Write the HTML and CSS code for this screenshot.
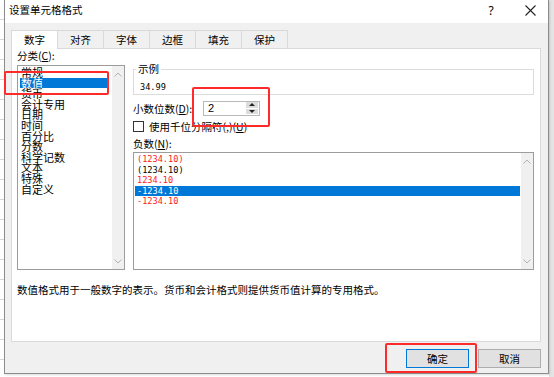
FILE: index.html
```html
<!DOCTYPE html>
<html lang="zh-CN">

<head>
    <meta charset="UTF-8" />
    <meta name="viewport" content="width=device-width, initial-scale=1.0" />
    <title>设置单元格格式</title>
    <link rel="stylesheet" href="styles.css">
</head>

<body>

    <div class="dialog">
        <div class="titlebar">
            <span class="title">设置单元格格式</span>
            <span class="help">?</span>
            <span class="close">
                <svg width="11" height="11" viewBox="0 0 11 11">
                    <path d="M0.5 0.5 L10.5 10.5 M10.5 0.5 L0.5 10.5" stroke="#222" stroke-width="1.1" fill="none" />
                </svg>
            </span>
        </div>

        <div class="content">
            <div class="tabs">
                <div class="tab active">数字</div>
                <div class="tab">对齐</div>
                <div class="tab">字体</div>
                <div class="tab">边框</div>
                <div class="tab">填充</div>
                <div class="tab">保护</div>
            </div>

            <div class="panel">
                <div class="panel-main">
                    <div class="col-left">
                        <div class="label">分类(<u>C</u>):</div>
                        <div class="listbox cat-list">
                            <ul class="items">
                                <li>常规</li>
                                <li class="selected">数值</li>
                                <li>货币</li>
                                <li>会计专用</li>
                                <li>日期</li>
                                <li>时间</li>
                                <li>百分比</li>
                                <li>分数</li>
                                <li>科学记数</li>
                                <li>文本</li>
                                <li>特殊</li>
                                <li>自定义</li>
                            </ul>
                            <div class="scrollbar">
                                <svg width="8" height="5" viewBox="0 0 8 5"><path d="M0.5 4.5 L4 1 L7.5 4.5" stroke="#b4b4b4" fill="none" /></svg>
                                <svg width="8" height="5" viewBox="0 0 8 5"><path d="M0.5 0.5 L4 4 L7.5 0.5" stroke="#b4b4b4" fill="none" /></svg>
                            </div>
                        </div>
                    </div>

                    <div class="col-right">
                        <fieldset class="sample">
                            <legend>示例</legend>
                            <div class="sample-value">34.99</div>
                        </fieldset>

                        <div class="row decimals">
                            <span class="row-label">小数位数(<u>D</u>):</span>
                            <div class="spin">
                                <span class="spin-value">2</span>
                                <div class="spin-btns">
                                    <span class="spin-btn"><i class="arrow-up"></i></span>
                                    <span class="spin-btn"><i class="arrow-down"></i></span>
                                </div>
                            </div>
                        </div>

                        <div class="row check">
                            <span class="checkbox"></span>
                            <span>使用千位分隔符(,)(<u>U</u>)</span>
                        </div>

                        <div class="label neg-label">负数(<u>N</u>):</div>
                        <div class="listbox neg-list">
                            <ul class="items">
                                <li class="red">(1234.10)</li>
                                <li>(1234.10)</li>
                                <li class="red">1234.10</li>
                                <li class="selected">-1234.10</li>
                                <li class="red">-1234.10</li>
                            </ul>
                            <div class="scrollbar">
                                <svg width="8" height="5" viewBox="0 0 8 5"><path d="M0.5 4.5 L4 1 L7.5 4.5" stroke="#b4b4b4" fill="none" /></svg>
                                <svg width="8" height="5" viewBox="0 0 8 5"><path d="M0.5 0.5 L4 4 L7.5 0.5" stroke="#b4b4b4" fill="none" /></svg>
                            </div>
                        </div>
                    </div>
                </div>

                <p class="desc">数值格式用于一般数字的表示。货币和会计格式则提供货币值计算的专用格式。</p>
            </div>

            <div class="buttons">
                <button class="btn default">确定</button>
                <button class="btn">取消</button>
            </div>
        </div>
    </div>

    <!-- red annotation boxes -->
    <div class="mark mark-cat"></div>
    <div class="mark mark-spin"></div>
    <div class="mark mark-ok"></div>

</body>

</html>
```

FILE: styles.css
```css
body {
    margin: 0;
    width: 554px;
    height: 377px;
    overflow: hidden;
    position: relative;
    font-family: "Noto Sans CJK SC", sans-serif;
    font-size: 10.5px;
    color: #000;
    background-color: #fff;
    background-image:
        linear-gradient(to right, transparent 549px, #e4e4e4 549px),
        repeating-linear-gradient(to bottom, transparent 0 19px, #d6d6d6 19px 20px);
}

ul {
    list-style: none;
    margin: 0;
    padding: 0;
}

u {
    text-decoration: underline;
}

.dialog {
    margin-left: 4px;
    width: 545px;
    height: 374px;
    box-sizing: border-box;
    border: 1px solid #8c8c8c;
    border-top: none;
    background: #f0f0f0;
    box-shadow: 1px 1px 2px rgba(0, 0, 0, 0.15);
}

.titlebar {
    height: 23px;
    background: #fff;
    display: flex;
    align-items: center;
    padding-left: 4px;
}

.title {
    flex: 1;
    line-height: 14px;
    margin-top: -4px;
}

.help {
    width: 30px;
    margin-right: 6px;
    text-align: center;
    font-family: "Noto Sans", sans-serif;
    font-size: 12px;
    margin-top: -2px;
}

.close {
    width: 36px;
    display: flex;
    justify-content: center;
    margin-top: -2px;
}

.content {
    padding: 7px 6px 0 6px;
}

.tabs {
    display: flex;
    height: 18px;
}

.tab {
    width: 47px;
    box-sizing: border-box;
    border: 1px solid #d9d9d9;
    border-bottom: none;
    margin-right: -1px;
    text-align: center;
    line-height: 17px;
    background: #f0f0f0;
}

.tab.active {
    background: #fff;
    height: 19px;
    position: relative;
    z-index: 1;
}

.panel {
    width: 530px;
    height: 294px;
    box-sizing: border-box;
    background: #fff;
    border: 1px solid #d9d9d9;
    padding: 0 6px 0 5px;
}

.panel-main {
    display: flex;
}

.col-left {
    width: 108px;
    margin-right: 8px;
}

.col-right {
    width: 401px;
}

.label {
    line-height: 14px;
    height: 14px;
}

.listbox {
    display: flex;
    box-sizing: border-box;
    border: 1px solid #9c9c9c;
    background: #fff;
}

.listbox .items {
    flex: 1;
    padding-top: 1px;
}

.listbox li {
    line-height: 10.6px;
    height: 10.6px;
    white-space: nowrap;
}

.scrollbar {
    width: 12px;
    background: #f0f0f0;
    display: flex;
    flex-direction: column;
    justify-content: space-between;
    align-items: center;
    padding: 6px 0 5px;
}

.cat-list {
    margin-top: 2px;
    height: 205px;
}

.cat-list li {
    margin: 0 3px 0 2px;
    padding-left: 1px;
    font-size: 11px;
}

.cat-list li.selected,
.neg-list li.selected {
    background: #0078d7;
    color: #fff;
}

.sample {
    margin: 13px 0 0;
    padding: 0 0 1px 2px;
    border: 1px solid #dcdcdc;
    min-width: 0;
}

.sample legend {
    padding: 0 2px;
    line-height: 14px;
}

.sample-value {
    font-family: "DejaVu Sans Mono", monospace;
    font-size: 8.6px;
    line-height: 12px;
    padding-left: 4px;
    margin-top: 5px;
}

.row {
    display: flex;
    align-items: center;
}

.decimals {
    margin-top: 6px;
    height: 14px;
}

.row-label {
    width: 70px;
}

.spin {
    width: 57px;
    height: 15px;
    box-sizing: border-box;
    border: 1px solid #b9b9b9;
    display: flex;
    align-items: center;
}

.spin-value {
    flex: 1;
    padding-left: 4px;
    font-family: "Liberation Sans", sans-serif;
    font-size: 11px;
}

.spin-btns {
    width: 12px;
    height: 12px;
    margin-right: 1px;
    display: flex;
    flex-direction: column;
    gap: 1px;
}

.spin-btn {
    flex: 1;
    background: #dcdcdc;
    display: flex;
    align-items: center;
    justify-content: center;
}

.arrow-up {
    border-left: 3px solid transparent;
    border-right: 3px solid transparent;
    border-bottom: 3px solid #222;
}

.arrow-down {
    border-left: 3px solid transparent;
    border-right: 3px solid transparent;
    border-top: 3px solid #222;
}

.check {
    margin-top: 6px;
    height: 11px;
}

.checkbox {
    width: 11px;
    height: 11px;
    box-sizing: border-box;
    border: 1px solid #333;
    margin-right: 5px;
}

.neg-label {
    margin-top: 5px;
    height: 13px;
    line-height: 13px;
}

.neg-list {
    margin-top: 2px;
    height: 118px;
}

.neg-list li {
    margin: 0 1px;
    padding-left: 2px;
    font-family: "DejaVu Sans Mono", monospace;
    font-size: 8.6px;
}

.neg-list li.red {
    color: #ff1a1a;
}

.desc {
    margin: 14px 0 0;
    line-height: 12px;
}

.buttons {
    display: flex;
    justify-content: flex-end;
    gap: 9px;
    margin-top: 7px;
    width: 530px;
}

.btn {
    width: 63px;
    height: 19px;
    padding: 0;
    font-family: "Noto Sans CJK SC", sans-serif;
    font-size: 10.5px;
    background: #e1e1e1;
    border: 1px solid #adadad;
    color: #000;
}

.btn.default {
    border: 1px solid #0078d7;
    box-shadow: inset 0 0 0 1px #e1e1e1;
}

.mark {
    position: absolute;
    box-sizing: border-box;
    border: 2px solid #ff2a2a;
    border-radius: 2px;
}

.mark-cat {
    left: 4px;
    top: 71px;
    width: 105px;
    height: 24px;
}

.mark-spin {
    left: 192px;
    top: 87px;
    width: 78px;
    height: 40px;
}

.mark-ok {
    left: 385px;
    top: 343px;
    width: 92px;
    height: 30px;
}
```
